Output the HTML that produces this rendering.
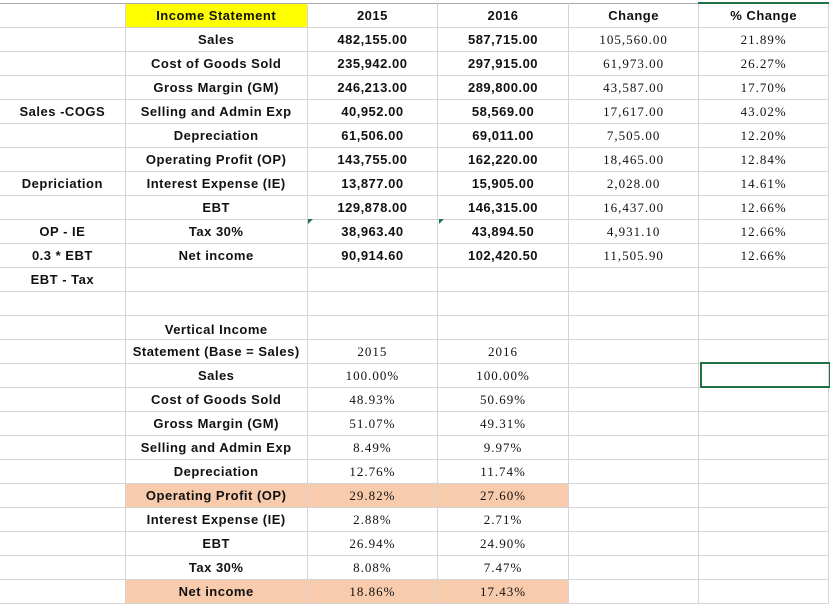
<!DOCTYPE html>
<html><head><meta charset="utf-8"><style>
body{margin:0;width:830px;height:607px;background:#fff;overflow:hidden;position:relative}
table{position:absolute;left:-1px;top:2px;border-collapse:collapse;table-layout:fixed}
tr{height:24px}
td{height:23px;max-height:23px;padding:0;border:1px solid #d4d4d4;text-align:center;font-family:"Liberation Sans",sans-serif;font-weight:bold;font-size:13px;letter-spacing:0.5px;color:#111;white-space:nowrap;overflow:hidden;line-height:23px;vertical-align:middle}
td.s{font-family:"Liberation Serif",serif;font-weight:normal;font-size:13px;letter-spacing:1px;line-height:23px}
.y{background:#ffff00}
.o{background:#f8cbad}
tr:first-child td{border-top:1px solid #aaa}
.tri{position:absolute;width:0;height:0;border-top:5px solid #217346;border-right:5px solid transparent}
.sel{position:absolute;left:700px;top:362px;width:127px;height:22px;border:2px solid #217346}
</style></head><body>
<table>
<colgroup><col style="width:126px"><col style="width:182px"><col style="width:131px"><col style="width:131px"><col style="width:131px"><col style="width:130px"></colgroup>
<tr><td></td><td class="y">Income Statement</td><td>2015</td><td>2016</td><td>Change</td><td style="border-top:2px solid #217346">% Change</td></tr>
<tr><td></td><td>Sales</td><td>482,155.00</td><td>587,715.00</td><td class="s">105,560.00</td><td class="s">21.89%</td></tr>
<tr><td></td><td>Cost of Goods Sold</td><td>235,942.00</td><td>297,915.00</td><td class="s">61,973.00</td><td class="s">26.27%</td></tr>
<tr><td></td><td>Gross Margin (GM)</td><td>246,213.00</td><td>289,800.00</td><td class="s">43,587.00</td><td class="s">17.70%</td></tr>
<tr><td>Sales -COGS</td><td>Selling and Admin Exp</td><td>40,952.00</td><td>58,569.00</td><td class="s">17,617.00</td><td class="s">43.02%</td></tr>
<tr><td></td><td>Depreciation</td><td>61,506.00</td><td>69,011.00</td><td class="s">7,505.00</td><td class="s">12.20%</td></tr>
<tr><td></td><td>Operating Profit (OP)</td><td>143,755.00</td><td>162,220.00</td><td class="s">18,465.00</td><td class="s">12.84%</td></tr>
<tr><td>Depriciation</td><td>Interest Expense (IE)</td><td>13,877.00</td><td>15,905.00</td><td class="s">2,028.00</td><td class="s">14.61%</td></tr>
<tr><td></td><td>EBT</td><td>129,878.00</td><td>146,315.00</td><td class="s">16,437.00</td><td class="s">12.66%</td></tr>
<tr><td>OP - IE</td><td>Tax 30%</td><td>38,963.40</td><td>43,894.50</td><td class="s">4,931.10</td><td class="s">12.66%</td></tr>
<tr><td>0.3 * EBT</td><td>Net income</td><td>90,914.60</td><td>102,420.50</td><td class="s">11,505.90</td><td class="s">12.66%</td></tr>
<tr><td>EBT - Tax</td><td></td><td></td><td></td><td></td><td></td></tr>
<tr><td></td><td></td><td></td><td></td><td></td><td></td></tr>
<tr><td></td><td style="padding-top:4px;height:19px;line-height:19px">Vertical Income</td><td></td><td></td><td></td><td></td></tr>
<tr><td></td><td>Statement (Base = Sales)</td><td class="s">2015</td><td class="s">2016</td><td></td><td></td></tr>
<tr><td></td><td>Sales</td><td class="s">100.00%</td><td class="s">100.00%</td><td></td><td></td></tr>
<tr><td></td><td>Cost of Goods Sold</td><td class="s">48.93%</td><td class="s">50.69%</td><td></td><td></td></tr>
<tr><td></td><td>Gross Margin (GM)</td><td class="s">51.07%</td><td class="s">49.31%</td><td></td><td></td></tr>
<tr><td></td><td>Selling and Admin Exp</td><td class="s">8.49%</td><td class="s">9.97%</td><td></td><td></td></tr>
<tr><td></td><td>Depreciation</td><td class="s">12.76%</td><td class="s">11.74%</td><td></td><td></td></tr>
<tr><td></td><td class="o">Operating Profit (OP)</td><td class="s o">29.82%</td><td class="s o">27.60%</td><td></td><td></td></tr>
<tr><td></td><td>Interest Expense (IE)</td><td class="s">2.88%</td><td class="s">2.71%</td><td></td><td></td></tr>
<tr><td></td><td>EBT</td><td class="s">26.94%</td><td class="s">24.90%</td><td></td><td></td></tr>
<tr><td></td><td>Tax 30%</td><td class="s">8.08%</td><td class="s">7.47%</td><td></td><td></td></tr>
<tr><td></td><td class="o">Net income</td><td class="s o">18.86%</td><td class="s o">17.43%</td><td></td><td></td></tr>
</table>
<div class="tri" style="left:308px;top:219px"></div>
<div class="tri" style="left:439px;top:219px"></div>
<div class="sel"></div>
</body></html>
